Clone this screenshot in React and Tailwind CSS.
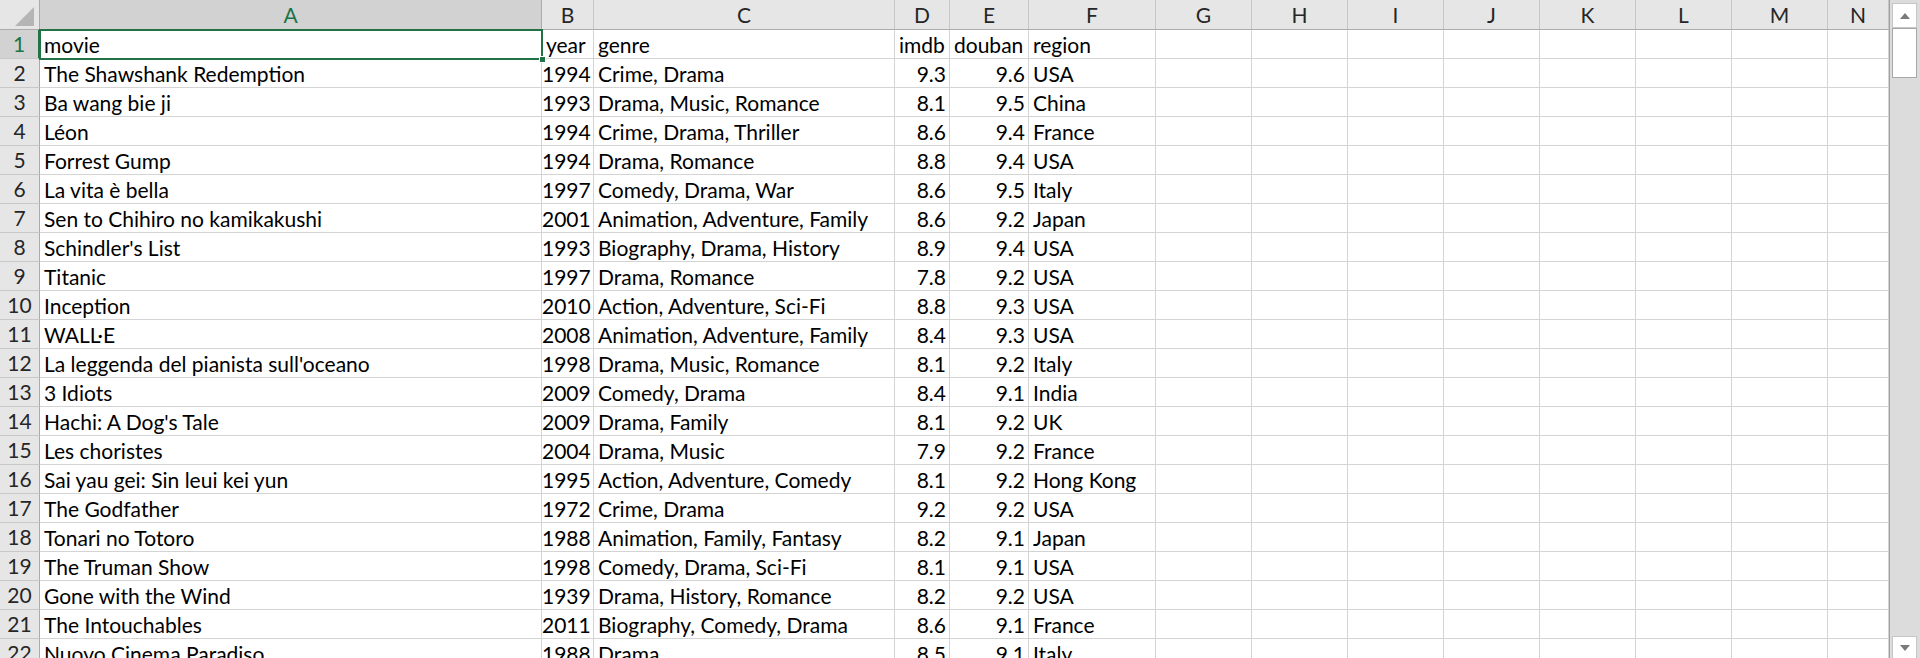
import React from 'react';

const cols = ['A', 'B', 'C', 'D', 'E', 'F', 'G', 'H', 'I', 'J', 'K', 'L', 'M', 'N'];

const rows = [
  ['movie', 'year', 'genre', 'imdb', 'douban', 'region'],
  ['The Shawshank Redemption', '1994', 'Crime, Drama', '9.3', '9.6', 'USA'],
  ['Ba wang bie ji', '1993', 'Drama, Music, Romance', '8.1', '9.5', 'China'],
  ['Léon', '1994', 'Crime, Drama, Thriller', '8.6', '9.4', 'France'],
  ['Forrest Gump', '1994', 'Drama, Romance', '8.8', '9.4', 'USA'],
  ['La vita è bella', '1997', 'Comedy, Drama, War', '8.6', '9.5', 'Italy'],
  ['Sen to Chihiro no kamikakushi', '2001', 'Animation, Adventure, Family', '8.6', '9.2', 'Japan'],
  ["Schindler's List", '1993', 'Biography, Drama, History', '8.9', '9.4', 'USA'],
  ['Titanic', '1997', 'Drama, Romance', '7.8', '9.2', 'USA'],
  ['Inception', '2010', 'Action, Adventure, Sci-Fi', '8.8', '9.3', 'USA'],
  ['WALL·E', '2008', 'Animation, Adventure, Family', '8.4', '9.3', 'USA'],
  ["La leggenda del pianista sull'oceano", '1998', 'Drama, Music, Romance', '8.1', '9.2', 'Italy'],
  ['3 Idiots', '2009', 'Comedy, Drama', '8.4', '9.1', 'India'],
  ["Hachi: A Dog's Tale", '2009', 'Drama, Family', '8.1', '9.2', 'UK'],
  ['Les choristes', '2004', 'Drama, Music', '7.9', '9.2', 'France'],
  ['Sai yau gei: Sin leui kei yun', '1995', 'Action, Adventure, Comedy', '8.1', '9.2', 'Hong Kong'],
  ['The Godfather', '1972', 'Crime, Drama', '9.2', '9.2', 'USA'],
  ['Tonari no Totoro', '1988', 'Animation, Family, Fantasy', '8.2', '9.1', 'Japan'],
  ['The Truman Show', '1998', 'Comedy, Drama, Sci-Fi', '8.1', '9.1', 'USA'],
  ['Gone with the Wind', '1939', 'Drama, History, Romance', '8.2', '9.2', 'USA'],
  ['The Intouchables', '2011', 'Biography, Comedy, Drama', '8.6', '9.1', 'France'],
  ['Nuovo Cinema Paradiso', '1988', 'Drama', '8.5', '9.1', 'Italy'],
];

// numbers sit at the right of the cell, like Excel
const rightAligned = (r, c) => r > 0 && (c === 1 || c === 3 || c === 4);

function Cell({ text, right }) {
  return (
    <div className={`h-[29px] border-r border-b border-[#d4d4d4] bg-white overflow-visible whitespace-nowrap text-[21px] leading-[29px] text-black ${right ? 'text-right pr-[3px]' : 'pl-[4px]'}`}>
      {text}
    </div>
  );
}

export default function App() {
  return (
    <div className="w-[1920px] h-[658px] overflow-hidden flex bg-white" style={{ fontFamily: 'Lato, "Liberation Sans", sans-serif' }}>
      <div className="relative w-[1890px] h-[658px] overflow-hidden border-r border-[#a0a0a0]">
        <div className="grid grid-cols-[40px_502px_52px_301px_55px_79px_127px_96px_96px_96px_96px_96px_96px_96px_61px]">
          {/* corner */}
          <div className="h-[30px] bg-[#e6e6e6] border-r border-b border-[#ababab] flex items-end justify-end pr-[4px] pb-[2px]">
            <svg width="20" height="20" viewBox="0 0 20 20">
              <polygon points="19,0 19,19 0,19" fill="#b5b5b5" />
            </svg>
          </div>
          {cols.map((c, i) => (
            <div
              key={c}
              className={`h-[30px] border-b flex items-center justify-center text-[21px] ${i === 0 ? 'bg-[#d2d2d2] text-[#217346] border-b-[#217346] border-r border-r-[#ababab]' : 'bg-[#e6e6e6] text-[#262626] border-b-[#ababab] border-r border-r-[#c6c6c6]'}`}
            >
              {c}
            </div>
          ))}

          {rows.map((row, r) => (
            <React.Fragment key={r}>
              <div
                className={`h-[29px] border-b border-[#c8c8c8] flex items-center justify-center text-[21px] leading-[28px] ${r === 0 ? 'bg-[#d2d2d2] text-[#217346] border-r-2 border-r-[#217346]' : 'bg-[#e6e6e6] text-[#262626] border-r border-r-[#ababab]'}`}
              >
                {r + 1}
              </div>
              {cols.map((c, ci) => (
                <Cell key={c} text={row[ci] || ''} right={rightAligned(r, ci)} />
              ))}
            </React.Fragment>
          ))}
        </div>

        {/* active cell A1 */}
        <div className="absolute left-[39px] top-[29px] w-[504px] h-[31px] border-2 border-[#217346] pointer-events-none">
          <div className="absolute right-[-5px] bottom-[-5px] w-[7px] h-[7px] bg-[#217346] border border-white" />
        </div>
      </div>

      {/* vertical scrollbar */}
      <div className="w-[30px] h-[658px] flex flex-col bg-[#dcdcdc] pl-[2px] pr-[3px] pt-[3px]">
        <div className="h-[25px] bg-white border border-[#c6c6c6] flex items-center justify-center">
          <svg width="12" height="8" viewBox="0 0 12 8"><polygon points="6,1 11,7 1,7" fill="#7a7a7a" /></svg>
        </div>
        <div className="h-[50px] bg-white border border-[#a8a8a8]" />
        <div className="flex-1" />
        <div className="h-[22px] bg-white border border-[#c6c6c6] border-b-0 flex items-center justify-center">
          <svg width="12" height="8" viewBox="0 0 12 8"><polygon points="1,1 11,1 6,7" fill="#7a7a7a" /></svg>
        </div>
      </div>
    </div>
  );
}
